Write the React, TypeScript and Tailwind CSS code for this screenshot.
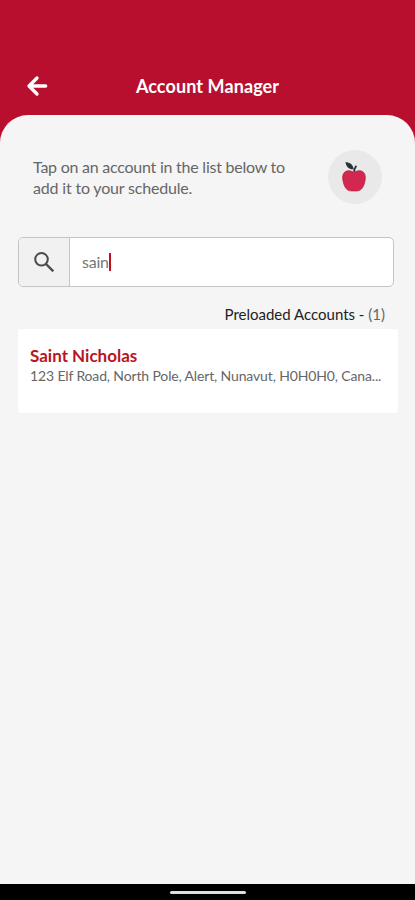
import React from "react";

type Account = {
  name: string;
  address: string;
};

const accounts: Account[] = [
  {
    name: "Saint Nicholas",
    address: "123 Elf Road, North Pole, Alert, Nunavut, H0H0H0, Cana...",
  },
];

const BackIcon: React.FC = () => (
  <svg width="22" height="22" viewBox="0 0 22 22" fill="none" className="block">
    <path
      d="M19.7 11H3M11 3 3 11l8 8"
      stroke="#fff"
      strokeWidth="3.3"
      strokeLinecap="round"
      strokeLinejoin="round"
    />
  </svg>
);

const SearchIcon: React.FC = () => (
  <svg width="20" height="20" viewBox="0 0 20 20" fill="none" className="block">
    <circle cx="7.5" cy="7.3" r="6.3" stroke="#4b4b4b" strokeWidth="2" />
    <path d="m12 12 7.3 7.3" stroke="#4b4b4b" strokeWidth="2.4" />
  </svg>
);

const AppleIcon: React.FC = () => (
  <svg width="24" height="30" viewBox="0 0 24 30" className="block">
    <path
      d="M12 10.5C9.5 8.9 6.6 8.3 4.2 9.2 1.1 10.5.3 14 .8 17.5c.6 4.4 2 8.200 4.600 10.300 1.900 1.500 4.700 1.100 6.600 1.100s4.700.4 6.600-1.100c2.600-2.100 4-5.900 4.600-10.300.5-3.500-.3-7-3.400-8.300-2.400-.9-5.300-.3-7.800 1.300Z"
      fill="#d22850"
      stroke="#b9143c"
      strokeWidth="0.7"
    />
    <path d="M12.200 9.800C12 7.800 12.700 6 14.300 3.800" stroke="#2b3036" strokeWidth="1.800" fill="none" />
    <path d="M3.400.2C8 .2 11.200 2.600 11.600 7.200 7.200 7.600 4.400 5 3.400.2Z" fill="#2b3036" />
  </svg>
);

const AccountCard: React.FC<{ account: Account }> = ({ account }) => (
  <div className="h-[84px] rounded-[3px] bg-white pl-3 pr-4 pt-[17px]">
    <div className="text-[17px] leading-5 font-bold text-[#b81423]">
      {account.name}
    </div>
    <div className="whitespace-nowrap text-[14px] leading-[19px] tracking-[-0.14px] text-[#666]">
      {account.address}
    </div>
  </div>
);

export default function App() {
  return (
    <div className="flex h-[900px] w-[415px] flex-col overflow-hidden bg-[#b80f2f] font-['Lato',sans-serif]">
      <header className="grid h-[115px] shrink-0 grid-cols-[1fr_auto_1fr] items-center pt-[56px]">
        <div className="pl-[26px]">
          <BackIcon />
        </div>
        <h1 className="text-[18px] leading-6 font-bold tracking-[0.1px] text-white">
          Account Manager
        </h1>
      </header>

      <main className="flex-1 rounded-t-[28px] bg-[#f5f5f5]">
        <div className="flex items-start justify-between pl-[33px] pr-[33px] pt-[35px]">
          <p className="mt-[6px] text-[16px] leading-[21px] tracking-[-0.24px] text-[#666]">
            Tap on an account in the list below to
            <br />
            <span className="tracking-[-0.18px]">add it to your schedule.</span>
          </p>
          <div className="flex size-[54px] items-center justify-center rounded-full bg-[#e9e9e9] pr-[2px]">
            <AppleIcon />
          </div>
        </div>

        <div className="ml-[18px] mt-[33px] flex h-[50px] w-[376px] overflow-hidden rounded-[5px] border border-[#c4c4c4] bg-white">
          <div className="flex w-[51px] items-center justify-center border-r border-[#c4c4c4] bg-[#f1f1f1]">
            <SearchIcon />
          </div>
          <div className="flex items-center pl-[12px] text-[16px] tracking-[-0.2px] text-[#777]">
            <span>sain</span>
            <span className="h-[18px] w-[2.5px] bg-[#c00f1f]" />
          </div>
        </div>

        <div className="mt-[17px] pr-[30px] text-right text-[15px] leading-5 text-[#222]">
          Preloaded Accounts - <span className="text-[#666]">(1)</span>
        </div>

        <div className="ml-[18px] mt-[5px] w-[380px]">
          {accounts.map((a) => (
            <AccountCard key={a.name} account={a} />
          ))}
        </div>
      </main>

      <footer className="flex h-4 shrink-0 items-center justify-center bg-black pt-px">
        <div className="h-[3px] w-[76px] rounded-full bg-[#e0e0e0]" />
      </footer>
    </div>
  );
}
